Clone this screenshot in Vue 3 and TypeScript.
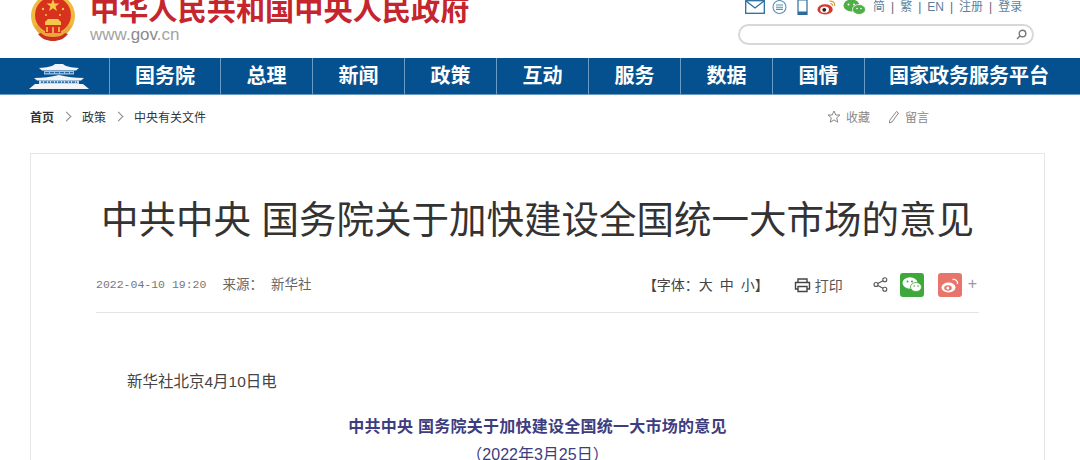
<script setup lang="ts">
const navItems = ['总理', '新闻', '政策', '互动', '服务', '数据', '国情']
const langLinks = ['简', '繁', 'EN', '注册', '登录']
</script>

<template>
  <div class="page">
    <header class="top">
      <div class="brand">
        <svg class="emblem" width="46" height="46" viewBox="0 0 46 46">
          <circle cx="23" cy="19" r="22" fill="#f0b93f" />
          <circle cx="23" cy="18" r="18" fill="#d8321f" />
          <path d="M23 2l1.600 4.600h4.800l-3.900 2.800 1.500 4.600-4-2.800-4 2.800 1.500-4.600-3.900-2.800h4.800z" fill="#f4c84a" />
          <circle cx="13" cy="12" r="1.200" fill="#f4c84a" />
          <circle cx="33" cy="12" r="1.200" fill="#f4c84a" />
          <circle cx="16" cy="18" r="1" fill="#f4c84a" />
          <circle cx="30" cy="18" r="1" fill="#f4c84a" />
          <path d="M15 25l3-3h10l3 3v3H15z" fill="#f4c84a" />
          <path d="M4 28c3 8 8 13 19 13s16-5 19-13l-5 1c-2 5-6 7-14 7S11 34 9 29z" fill="#e9a93a" />
          <path d="M8 37c4 5 9 7 15 7s11-2 15-7l-3-1c-3 3-7 4-12 4s-9-1-12-4z" fill="#c9301f" />
          <path d="M15 30h16v6H15z" fill="#d8321f" />
          <path d="M17 30v5M23 30v6M29 30v5" stroke="#f4c84a" stroke-width="1.600" />
        </svg>
        <div class="brand-text">
          <div class="site-name">中华人民共和国中央人民政府</div>
          <div class="site-url">www.<span class="gov">gov</span>.cn</div>
        </div>
      </div>
      <div class="tools">
        <div class="tool-row">
          <svg width="20" height="14" viewBox="0 0 20 14" fill="none" stroke="#2a6d9c" stroke-width="1.300"><rect x="0.700" y="0.700" width="18.600" height="12.600" /><path d="M1 1l9 7 9-7" /></svg>
          <svg class="chat" width="17" height="15" viewBox="0 0 17 15" fill="none" stroke="#5a8fb0" stroke-width="1.100"><circle cx="8.500" cy="7" r="6.500" /><path d="M5 5h7M5 7.200h7M5 9.400h7" /></svg>
          <svg class="phone" width="11" height="15" viewBox="0 0 11 15"><path d="M1 0h9v15H1z" fill="#fff" stroke="#2a6d9c" stroke-width="1.200" /><path d="M1 11.500h9V15H1z" fill="#2a6d9c" /></svg>
          <svg width="20" height="16" viewBox="0 0 21 16"><ellipse cx="8.500" cy="10.500" rx="8" ry="5.300" fill="#d8372c" /><ellipse cx="8" cy="10.800" rx="4.600" ry="3.300" fill="#fff" /><circle cx="7.600" cy="11" r="2" fill="#222" /><path d="M13 2c3-1 6 1 5.500 5M14 4.500c1.500-.3 2.500.8 2.300 2.300" fill="none" stroke="#e9982f" stroke-width="1.300" /></svg>
          <svg width="23" height="15" viewBox="0 0 23 15"><ellipse cx="8.500" cy="5.500" rx="8" ry="6" fill="#4fae45" /><ellipse cx="16" cy="9.500" rx="6.500" ry="5" fill="#4fae45" stroke="#fff" stroke-width=".8" /><circle cx="5.500" cy="4.500" r="1" fill="#fff" /><circle cx="11" cy="4.500" r="1" fill="#fff" /><circle cx="14" cy="8.500" r=".8" fill="#fff" /><circle cx="18" cy="8.500" r=".8" fill="#fff" /></svg>
          <div class="lang">
            <template v-for="(item, i) in langLinks" :key="item">
              <span v-if="i > 0" class="bar">|</span>
              <span>{{ item }}</span>
            </template>
          </div>
        </div>
        <div class="search">
          <svg width="11" height="11" viewBox="0 0 11 11" fill="none" stroke="#777" stroke-width="1.400"><circle cx="6.500" cy="4.500" r="3.300" /><path d="M4 7l-3 3" /></svg>
        </div>
      </div>
    </header>

    <nav class="nav">
      <div class="nav-logo">
        <svg width="60" height="27" viewBox="0 0 60 27">
          <!-- upper roof -->
          <path d="M10 6c8-.3 13-1.500 16-4h8c3 2.500 8 3.700 16 4l-3 2.500H13z" fill="#eef4f9" />
          <path d="M15 9h30v3.500H15z" fill="#a9c5dc" />
          <path d="M16 10.700h28" stroke="#0a4f8c" stroke-width="1" stroke-dasharray="4 1" />
          <!-- lower roof -->
          <path d="M5 16c9-.2 17-1 25-3 8 2 16 2.800 25 3l-3 2.500H8z" fill="#eef4f9" />
          <path d="M10 18.500h40v3.500H10z" fill="#c4d8e8" />
          <path d="M12 20.200h36" stroke="#0a4f8c" stroke-width="1.200" stroke-dasharray="2 1 3 1" />
          <!-- base -->
          <path d="M6 22h48l6 5H0z" fill="#f2f6fa" />
        </svg>
      </div>
      <div class="nav-item first">国务院</div>
      <div v-for="item in navItems" :key="item" class="nav-item">{{ item }}</div>
      <div class="nav-item last">国家政务服务平台</div>
    </nav>

    <div class="crumbs">
      <div class="crumb-links">
        <b>首页</b>
        <span class="arrow"></span>
        <span>政策</span>
        <span class="arrow"></span>
        <span>中央有关文件</span>
      </div>
      <div class="crumb-tools">
        <span class="crumb-tool">
          <svg width="14" height="14" viewBox="0 0 14 14" fill="none" stroke="#888" stroke-width="1"><path d="M7 1l1.800 4h4.200l-3.300 2.800 1.100 4.400L7 9.900l-3.800 2.300 1.100-4.400L1 5h4.200z" /></svg>
          收藏
        </span>
        <span class="crumb-tool">
          <svg width="12" height="14" viewBox="0 0 12 14" fill="none" stroke="#888" stroke-width="1"><path d="M8.500 1.500l2 1.500-6.500 9-2.500 1 .3-2.800z" /></svg>
          留言
        </span>
      </div>
    </div>

    <main class="panel">
      <h1 class="title">中共中央 国务院关于加快建设全国统一大市场的意见</h1>
      <div class="meta">
        <div class="meta-left">
          <span class="date">2022-04-10 19:20</span>
          <span class="source-label">来源：</span>
          <span class="source">新华社</span>
        </div>
        <div class="meta-right">
          <span class="font-size">【字体：大 中 小】</span>
          <span class="print">
            <svg width="17" height="15" viewBox="0 0 17 15" fill="none" stroke="#444" stroke-width="1.400"><path d="M4 4V1h9v3M4 11H1.500V4.500h14V11H13" /><path d="M4 8.500h9v5H4z" /></svg>
            打印
          </span>
          <svg class="share" width="15" height="15" viewBox="0 0 15 15" fill="none" stroke="#555" stroke-width="1.100"><circle cx="11.800" cy="2.800" r="2" /><circle cx="3" cy="7.500" r="2" /><circle cx="11.800" cy="12.200" r="2" /><path d="M4.800 6.500l5.200-2.800M4.800 8.500l5.200 2.800" /></svg>
          <span class="badge wx">
            <svg width="20" height="16" viewBox="0 0 20 16"><ellipse cx="8" cy="6" rx="7.500" ry="5.800" fill="#fff" /><ellipse cx="14" cy="10" rx="5.500" ry="4.500" fill="#fff" stroke="#43a83f" stroke-width=".8" /><circle cx="5.500" cy="4.500" r="1" fill="#43a83f" /><circle cx="10" cy="4.500" r="1" fill="#43a83f" /><circle cx="12.300" cy="9" r=".8" fill="#43a83f" /><circle cx="16" cy="9" r=".8" fill="#43a83f" /></svg>
          </span>
          <span class="badge wb">
            <svg width="18" height="15" viewBox="0 0 18 15"><ellipse cx="7.500" cy="9.500" rx="7" ry="5" fill="#fff" /><ellipse cx="7" cy="10" rx="3.800" ry="2.800" fill="#e8756b" /><circle cx="6.800" cy="10" r="1.500" fill="#fff" /><path d="M11.500 1.500c3-.7 5.500 1.500 5 4.500" fill="none" stroke="#fff" stroke-width="1.300" /></svg>
          </span>
          <span class="plus">+</span>
        </div>
      </div>
      <div class="body">
        <p class="lead">新华社北京4月10日电</p>
        <p class="doc-title">中共中央 国务院关于加快建设全国统一大市场的意见</p>
        <p class="doc-date">（2022年3月25日）</p>
      </div>
    </main>
  </div>
</template>

<style>
html,
body {
  margin: 0;
  height: 460px;
  overflow: hidden;
  background: #fff;
}
</style>

<style scoped>
.page {
  width: 1080px;
  height: 460px;
  overflow: hidden;
  font-family: "Liberation Sans", "Noto Sans CJK SC", sans-serif;
  color: #333;
}

.top {
  height: 58px;
  box-sizing: border-box;
  padding: 0 46px 0 30px;
  display: flex;
  justify-content: space-between;
  overflow: hidden;
}

.brand {
  display: flex;
  gap: 14px;
  align-items: flex-start;
}

.emblem {
  flex: none;
  margin-top: -3px;
}

.site-name {
  margin-top: -9px;
  font-size: 29.200px;
  line-height: 38px;
  font-weight: 700;
  color: #c5252d;
  white-space: nowrap;
}

.site-url {
  margin-top: -4px;
  font-size: 17px;
  line-height: 20px;
  color: #a3a3a3;
}

.gov {
  color: #8a8a8a;
}

.tools {
  width: 296px;
  display: flex;
  flex-direction: column;
}

.tool-row {
  height: 14px;
  padding-left: 7px;
  display: flex;
  align-items: center;
  gap: 6px;
}

.chat {
  margin-right: 3px;
}

.phone {
  margin-right: 3px;
}

.lang {
  margin-left: 1px;
  display: flex;
  gap: 6px;
  font-size: 12px;
  line-height: 14px;
  color: #5c7f9c;
}

.bar {
  color: #666;
}

.search {
  margin-top: 10px;
  height: 21px;
  box-sizing: border-box;
  border: 2px solid #d8d8d8;
  border-radius: 11px;
  display: flex;
  align-items: center;
  justify-content: flex-end;
  padding-right: 5px;
}

.nav {
  height: 37px;
  box-sizing: border-box;
  border-bottom: 1px solid #6a9cc6;
  background: #05518f;
  display: flex;
  color: #fff;
}

.nav-logo {
  width: 109px;
  box-sizing: border-box;
  padding: 4px 0 0 29px;
  flex: none;
}

.nav-item {
  width: 92px;
  box-sizing: border-box;
  border-left: 1px solid #6a9cc6;
  text-align: center;
  font-size: 20px;
  font-weight: 700;
  line-height: 36px;
}

.nav-item.first {
  width: 111px;
}

.nav-item.last {
  width: 209px;
}

.crumbs {
  height: 43px;
  box-sizing: border-box;
  padding: 0 151px 0 30px;
  display: flex;
  justify-content: space-between;
  align-items: center;
  font-size: 12px;
}

.crumb-links {
  display: flex;
  align-items: center;
  gap: 10px;
  color: #333;
}

.arrow {
  width: 6px;
  height: 6px;
  margin: 0 2px 0 -1px;
  border-top: 1px solid #888;
  border-right: 1px solid #888;
  transform: rotate(45deg);
}

.crumb-tools {
  display: flex;
  gap: 18px;
  color: #888;
}

.crumb-tool {
  display: flex;
  align-items: center;
  gap: 5px;
}

.panel {
  margin: 15px 35px 0 30px;
  height: 400px;
  box-sizing: border-box;
  border: 1px solid #e6e6e6;
  padding: 0 65px;
}

.title {
  margin: 44px 0 0;
  font-size: 37.500px;
  line-height: 44px;
  font-weight: 400;
  text-align: center;
  color: #333;
  white-space: nowrap;
}

.meta {
  margin-top: 32px;
  height: 39px;
  box-sizing: border-box;
  border-bottom: 1px solid #e4e4e4;
  display: flex;
  justify-content: space-between;
  font-size: 14px;
  color: #666;
}

.meta-left {
  display: flex;
  line-height: 22px;
}

.date {
  font-family: "Liberation Mono", monospace;
  font-size: 11.500px;
  color: #777;
  margin-right: 16px;
}

.source-label,
.source {
  font-size: 13.500px;
}

.source-label {
  margin-right: 8px;
}

.meta-right {
  display: flex;
  align-items: flex-start;
  color: #555;
}

.font-size {
  line-height: 22px;
  margin-right: 25px;
  color: #444;
  word-spacing: 3px;
}

.print {
  display: flex;
  align-items: center;
  gap: 4px;
  height: 22px;
  margin-right: 30px;
}

.share {
  margin: 3px 12px 0 0;
}

.badge {
  width: 24px;
  height: 24px;
  margin-top: -1px;
  border-radius: 3px;
  display: flex;
  align-items: center;
  justify-content: center;
  margin-right: 14px;
}

.wx {
  background: #3fa83d;
}

.wb {
  background: #e8756b;
  margin-right: 6px;
}

.plus {
  margin-right: 2px;
  font-size: 16px;
  line-height: 20px;
  color: #999;
}

.body {
  color: #444;
}

.lead {
  margin: 59px 0 0 31px;
  font-size: 15.500px;
  line-height: 20px;
}

.doc-title {
  margin: 25px 0 0;
  text-align: center;
  font-size: 16px;
  letter-spacing: 0.25px;
  font-weight: 700;
  color: #3d3d80;
  line-height: 20px;
}

.doc-date {
  margin: 8px 0 0;
  text-align: center;
  font-size: 16px;
  line-height: 20px;
  color: #3d3d80;
}
</style>
